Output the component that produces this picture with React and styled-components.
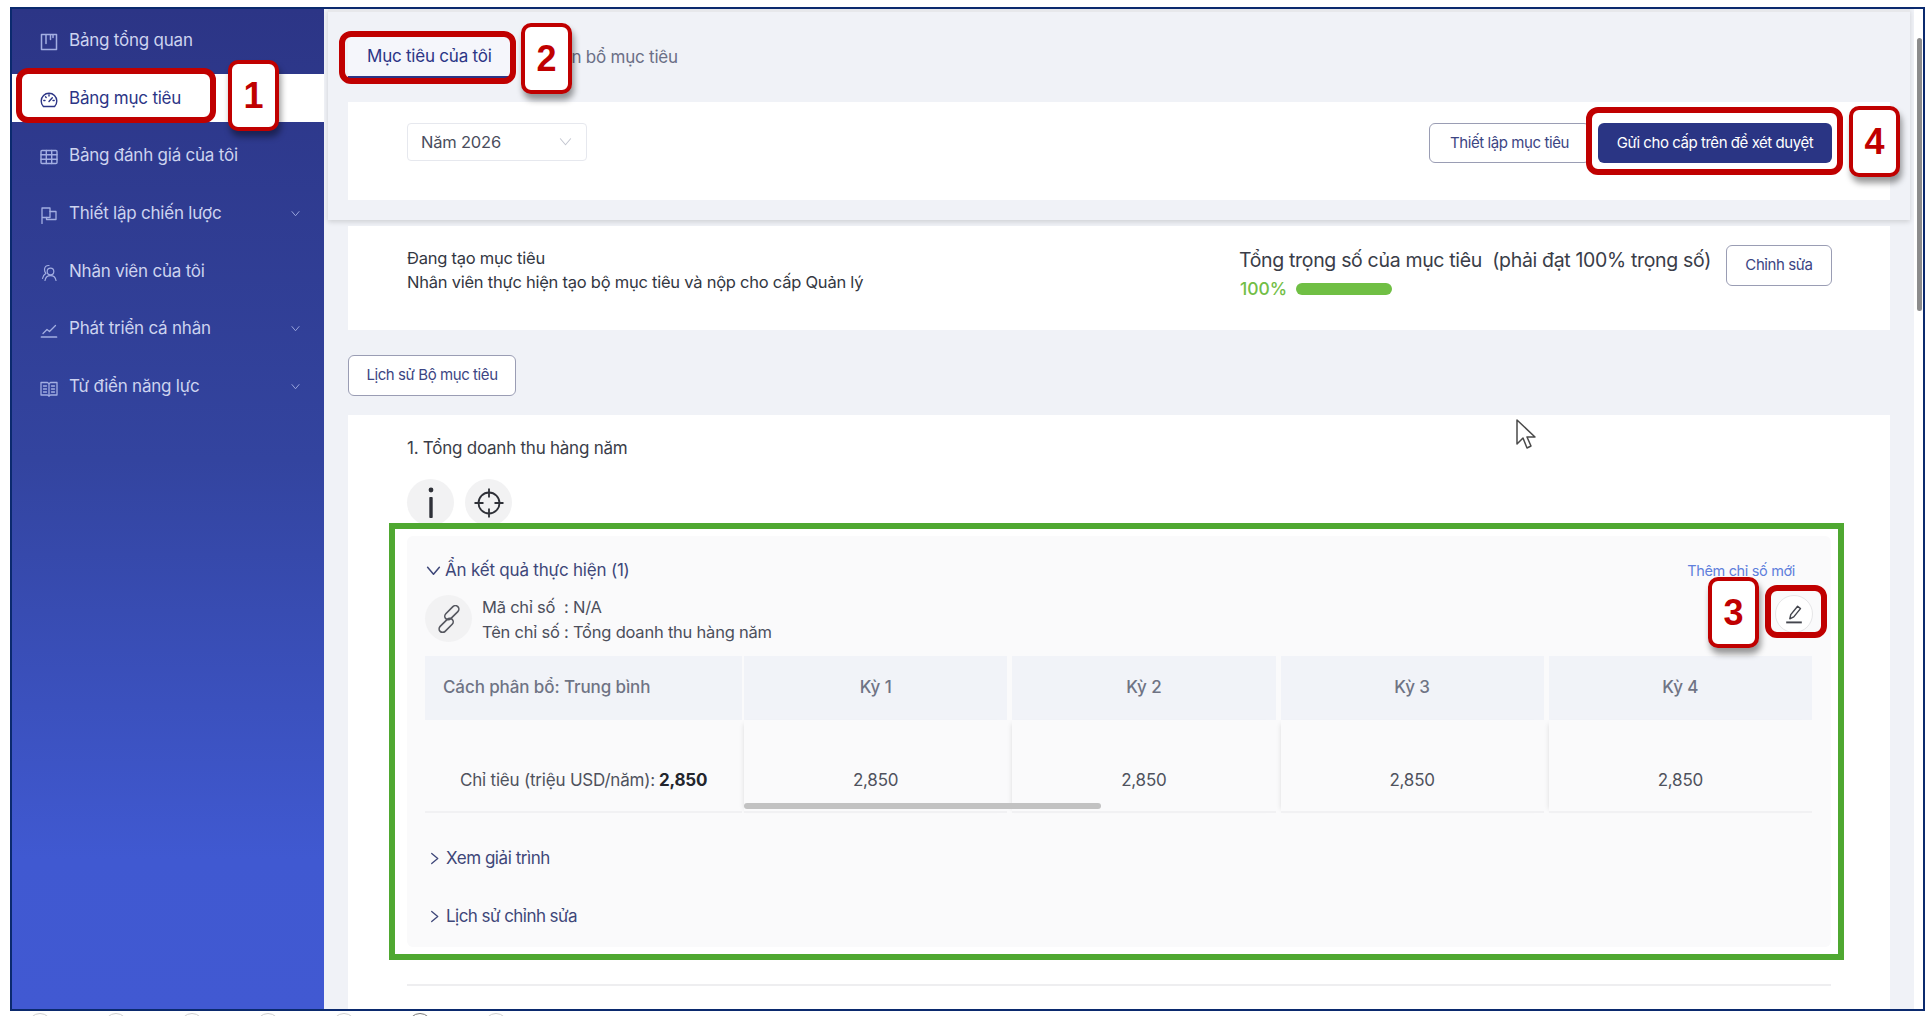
import React from "react";
import styled, { createGlobalStyle } from "styled-components";

const Global = createGlobalStyle`
  html, body { margin: 0; padding: 0; background: #fff; }
  body { font-family: Inter, "Noto Sans", "Liberation Sans", sans-serif; }
  * { box-sizing: border-box; }
`;

const Page = styled.div`
  position: relative;
  width: 1930px;
  height: 1016px;
  overflow: hidden;
  background: #fff;
`;
const Frame = styled.div`
  display: flex;
  width: 1915px;
  height: 1004px;
  margin: 7px 0 0 10px;
  border: 2px solid #0b2a6e;
  overflow: hidden;
`;
const Sidebar = styled.nav`
  flex: 0 0 312px;
  display: flex;
  flex-direction: column;
  gap: 9.7px;
  padding-top: 7px;
  background: linear-gradient(180deg, #2c3586 0%, #33449f 45%, #4059d1 85%, #4159d2 100%);
`;
const NavItem = styled.div`
  display: flex;
  align-items: center;
  gap: 11px;
  height: 48px;
  padding: 0 22px 0 28px;
  font-size: 17px;
  letter-spacing: -0.22px;
  color: ${(p) => (p.$active ? "#2c3586" : "#cdd3ef")};
  background: ${(p) => (p.$active ? "#fff" : "transparent")};
  svg { flex: none; }
`;
const NavIcon = styled.span`
  display: flex;
  padding-top: 4px;
  color: ${(p) => (p.$active ? "#2c3586" : "#a3aee2")};
`;
const NavChevron = styled.span`
  display: flex;
  margin-left: auto;
  padding-right: 2px;
  color: #a3aee2;
`;
const Main = styled.div`
  flex: 1;
  display: flex;
  min-width: 0;
`;
const Content = styled.div`
  flex: 1;
  background: #f0f2f7;
  min-width: 0;
  overflow: hidden;
`;
const Track = styled.div`
  flex: 0 0 9px;
  background: #fff;
  padding-top: 29px;
`;
const Thumb = styled.div`
  width: 5px;
  margin-left: 3px;
  height: 273px;
  border-radius: 3px;
  background: #8c8c8c;
`;
const Sticky = styled.header`
  margin: 0 4px 0 4px;
  height: 211px;
  padding: 0 20px;
  background: #f0f2f7;
  border-top: 3px solid #e7e8eb;
  box-shadow: 0 2px 5px rgba(0, 0, 0, 0.14);
`;
const Tabs = styled.div`
  display: flex;
  height: 90px;
  padding-top: 24px;
  align-items: flex-start;
  gap: 12px;
`;
const Tab = styled.div`
  height: 42px;
  padding: 0 19px;
  display: flex;
  align-items: center;
  font-size: 17px;
  letter-spacing: -0.22px;
  color: ${(p) => (p.$active ? "#2c3586" : "#6b6f86")};
  background: ${(p) => (p.$active ? "#f5f6fb" : "transparent")};
  border-bottom: ${(p) => (p.$active ? "2px solid #2c3586" : "none")};
`;
const ToolCard = styled.section`
  display: flex;
  justify-content: space-between;
  align-items: flex-start;
  height: 98px;
  padding: 21px 58px 0 59px;
  background: #fff;
`;
const YearSelect = styled.div`
  display: flex;
  align-items: center;
  justify-content: space-between;
  width: 180px;
  height: 38px;
  padding: 0 14px 1px 13px;
  border: 1px solid #e6e8ee;
  border-radius: 4px;
  font-size: 16.5px;
  letter-spacing: -0.2px;
  color: #4a4d5c;
`;
const ButtonRow = styled.div`
  display: flex;
  gap: 8px;
`;
const OutlineButton = styled.div`
  display: flex;
  align-items: center;
  justify-content: center;
  height: ${(p) => p.$h || 40}px;
  width: ${(p) => p.$w}px;
  padding-bottom: 2px;
  border: 1px solid #9a9db4;
  border-radius: 6px;
  font-size: 15px;
  letter-spacing: -0.42px;
  color: #3c4583;
  background: #fff;
`;
const PrimaryButton = styled.div`
  display: flex;
  align-items: center;
  justify-content: center;
  width: 234px;
  height: 40px;
  padding-bottom: 2px;
  border-radius: 6px;
  background: #2a3584;
  color: #fff;
  font-size: 15px;
  letter-spacing: -0.45px;
`;
const Body = styled.div`
  padding: 6px 24px 0 24px;
`;
const StatusCard = styled.section`
  display: flex;
  justify-content: space-between;
  height: 104px;
  padding: 19px 58px 0 59px;
  background: #fff;
`;
const StatusText = styled.div`
  padding-top: 1px;
  font-size: 16.5px;
  line-height: 24px;
  letter-spacing: -0.24px;
  color: #333742;
`;
const WeightGroup = styled.div`
  display: flex;
  gap: 15px;
  align-items: flex-start;
`;
const WeightTitle = styled.div`
  font-size: 19.5px;
  line-height: 26px;
  padding-top: 2px;
  letter-spacing: -0.33px;
  color: #3a3d48;
  white-space: pre;
`;
const WeightBar = styled.div`
  display: flex;
  align-items: center;
  gap: 9px;
  margin-top: 3px;
  padding: 1px 0 0 1px;
  font-size: 17.5px;
  font-weight: 500;
  line-height: 24px;
  color: #72be46;
`;
const BarFill = styled.div`
  width: 96px;
  height: 12px;
  border-radius: 6px;
  background: #70bf44;
`;
const HistoryButton = styled(OutlineButton)`
  margin-top: 25px;
`;
const GoalCard = styled.section`
  margin-top: 19px;
  height: 600px;
  padding: 20px 59px 0;
  background: #fff;
`;
const GoalTitle = styled.div`
  padding-top: 1px;
  height: 24px;
  font-size: 17px;
  line-height: 24px;
  letter-spacing: -0.24px;
  color: #3a3d48;
`;
const RoundRow = styled.div`
  display: flex;
  gap: 11px;
  margin-top: 20px;
`;
const RoundIcon = styled.div`
  display: flex;
  align-items: center;
  justify-content: center;
  flex: none;
  width: 47px;
  height: 47px;
  border-radius: 50%;
  background: #f2f2f3;
  color: #2f3138;
`;
const ResultPanel = styled.div`
  margin-top: 10px;
  height: 411px;
  padding: 22px 19px 0 18px;
  background: #fafafb;
  border-radius: 6px;
`;
const PanelHead = styled.div`
  display: flex;
  justify-content: space-between;
  align-items: center;
  height: 24px;
`;
const Toggle = styled.div`
  display: flex;
  align-items: center;
  gap: ${(p) => p.$gap || 4}px;
  height: 24px;
  padding-left: ${(p) => p.$indent || 1}px;
  font-size: 17px;
  letter-spacing: ${(p) => p.$track || -0.2}px;
  color: #3e4779;
  svg { flex: none; }
`;
const AddLink = styled.div`
  margin-right: 17px;
  font-size: 14.5px;
  letter-spacing: -0.34px;
  color: #5f7fdc;
`;
const InfoRow = styled.div`
  display: flex;
  align-items: flex-start;
  margin-top: 13px;
  height: 48px;
`;
const InfoText = styled.div`
  margin-left: 10px;
  flex: 1;
  font-size: 16.5px;
  line-height: 25px;
  letter-spacing: -0.22px;
  color: #4c4f5b;
`;
const EditCircle = styled.div`
  display: flex;
  align-items: center;
  justify-content: center;
  width: 38px;
  height: 38px;
  margin-right: -1px;
  border: 1px solid #e6e6e8;
  border-radius: 50%;
  background: #fff;
`;
const TableWrap = styled.div`
  position: relative;
  margin-top: 13px;
  display: grid;
  grid-template-columns: 314px repeat(4, 1fr);
  column-gap: 5px;
`;
const HeadCell = styled.div`
  display: flex;
  align-items: center;
  justify-content: ${(p) => (p.$first ? "flex-start" : "center")};
  height: 64px;
  margin-right: ${(p) => (p.$first ? -3 : 0)}px;
  padding: 0 0 2px ${(p) => (p.$first ? 18 : 0)}px;
  background: #f1f3f8;
  font-size: 17px;
  font-weight: 500;
  letter-spacing: -0.1px;
  color: #6f7384;
`;
const ValueCell = styled.div`
  display: flex;
  align-items: flex-end;
  justify-content: ${(p) => (p.$first ? "flex-start" : "center")};
  height: 93px;
  margin-right: ${(p) => (p.$first ? -3 : 0)}px;
  padding: 0 0 19px ${(p) => (p.$first ? 35 : 0)}px;
  border-bottom: 2px solid #f1f1f3;
  box-shadow: ${(p) => (p.$first ? "none" : "-4px 0 5px -4px rgba(0,0,0,0.12)")};
  font-size: 17px;
  line-height: 24px;
  letter-spacing: -0.2px;
  color: #4f525d;
  b { font-weight: 700; color: #23252c; margin-left: 4px; }
`;
const HScroll = styled.div`
  position: absolute;
  left: 319px;
  bottom: 4px;
  width: 357px;
  height: 6px;
  border-radius: 3px;
  background: #c2c2c2;
`;
const Section = styled.div`
  margin-top: 33px;
  & + & { margin-top: 34px; }
`;
const Divider = styled.hr`
  height: 2px;
  margin: 37px 0 0;
  border: 0;
  background: #eeeef0;
`;
const FooterArcs = styled.div`
  display: flex;
  gap: 52px;
  height: 5px;
  padding-left: 28px;
  overflow: hidden;
`;
const Arc = styled.span`
  flex: none;
  width: 24px;
  height: 24px;
  margin-top: 2px;
  border-radius: 50%;
  border: 1px solid ${(p) => (p.$dark ? "#777" : "#cfcfcf")};
`;
const Callout = styled.div`
  position: absolute;
  left: ${(p) => p.$x}px;
  top: ${(p) => p.$y}px;
  width: ${(p) => p.$w}px;
  height: ${(p) => p.$h}px;
  border: 6px solid #c00000;
  border-radius: 12px;
  pointer-events: none;
`;
const Badge = styled.div`
  position: absolute;
  left: ${(p) => p.$x}px;
  top: ${(p) => p.$y}px;
  width: 51px;
  height: 71px;
  display: flex;
  align-items: center;
  justify-content: center;
  border: 4px solid #c00000;
  border-radius: 10px;
  background: #fff;
  box-shadow: 2px 6px 6px rgba(0, 0, 0, 0.4);
  font-family: "Liberation Sans", Arial, sans-serif;
  font-weight: 700;
  font-size: 36px;
  color: #c00000;
`;
const GreenBox = styled.div`
  position: absolute;
  left: 389px;
  top: 523px;
  width: 1455px;
  height: 437px;
  border: 6px solid #4fa831;
  pointer-events: none;
`;
const Cursor = styled.svg`
  position: absolute;
  left: 1515px;
  top: 418px;
`;

const I = ({ children, w = 1.1 }) => (
  <svg width="18" height="18" viewBox="0 0 18 18" fill="none" stroke="currentColor" strokeWidth={w} strokeLinecap="round" strokeLinejoin="round">{children}</svg>
);
const Chev = ({ dir = "down", s = 14, c = "currentColor", w = 1.4 }) => (
  <svg width={s} height={s} viewBox="0 0 14 14" fill="none" stroke={c} strokeWidth={w} strokeLinecap="round" strokeLinejoin="round">
    {dir === "down" ? <path d="M1.500 4 7 10.500 12.500 4" /> : <path d="M4 1.500 10.500 7 4 12.500" />}
  </svg>
);
const navItems = [
  ["Bảng tổng quan", <I key="a" w={1.5}><rect x="1.500" y="1.500" width="15" height="15" /><path d="M6 2v8.500M10.500 2v4.500M13 2v2.500" /></I>],
  ["Bảng mục tiêu", <I key="b" w={1.4}><path d="M3.400 15.500a7.800 7.800 0 1 1 11.200 0Z" /><path d="m9 10.500 3.300-3.800M3.800 9.500h1.200M13 9.500h1.200M5.500 5.800l.7.7M9 3.800v1.200" /></I>, false, true],
  ["Bảng đánh giá của tôi", <I key="c" w={1.4}><rect x="1" y="2.500" width="16" height="13" rx="1" /><path d="M1 6.800h16M1 11.200h16M6.300 2.500v13M11.700 2.500v13" /></I>],
  ["Thiết lập chiến lược", <I key="d" w={1.3}><path d="M2 17.500V2h8v9.500H2" /><path d="M10 5.500h6v8H6.500v-2" /></I>, true],
  ["Nhân viên của tôi", <I key="e" w={1.2}><circle cx="10.500" cy="7.500" r="3.300" /><path d="M5 16.500c.5-3 2.600-4.800 5.500-4.800s5 1.800 5.500 4.800M9 1.500a4.300 4.300 0 0 0-4.500 3.800c-.1 1.700.5 3 1.500 4-1.800 1-3 2.800-3.500 5.200" /></I>],
  ["Phát triển cá nhân", <I key="f" w={1.3}><path d="M1.500 16h15" strokeWidth="1.700" /><path d="M3 12.500 7 8.500l2.500 2 6-6" /></I>, true],
  ["Từ điển năng lực", <I key="g" w={1.3}><path d="M1 3.500h6.500L9 4.700l1.500-1.200H17V16h-6.500L9 17l-1.500-1H1Z" /><path d="M9 4.700V17M3.500 7h3M3.500 10h3M3.500 13h3M11.500 7h3M11.500 10h3M11.500 13h3" /></I>, true],
];
const periods = ["Kỳ 1", "Kỳ 2", "Kỳ 3", "Kỳ 4"];
const callouts = [
  { x: 16, y: 68, w: 200, h: 55 },
  { x: 339, y: 31, w: 177, h: 53 },
  { x: 1586, y: 107, w: 257, h: 68 },
  { x: 1765, y: 585, w: 62, h: 53 },
];
const badges = [
  { x: 228, y: 60, n: 1 },
  { x: 521, y: 23, n: 2 },
  { x: 1708, y: 577, n: 3 },
  { x: 1849, y: 106, n: 4 },
];

export default function App() {
  return (
    <Page>
      <Global />
      <Frame>
        <Sidebar>
          {navItems.map(([label, icon, more, active]) => (
            <NavItem key={label} $active={active}>
              <NavIcon $active={active}>{icon}</NavIcon>
              {label}
              {more && <NavChevron><Chev s={9} /></NavChevron>}
            </NavItem>
          ))}
        </Sidebar>
        <Main>
          <Content>
            <Sticky>
              <Tabs>
                <Tab $active>Mục tiêu của tôi</Tab>
                <Tab>Phân bổ mục tiêu</Tab>
              </Tabs>
              <ToolCard>
                <YearSelect>Năm 2026<Chev s={13} c="#c3c6d0" w={1.1} /></YearSelect>
                <ButtonRow>
                  <OutlineButton $w={161}>Thiết lập mục tiêu</OutlineButton>
                  <PrimaryButton>Gửi cho cấp trên để xét duyệt</PrimaryButton>
                </ButtonRow>
              </ToolCard>
            </Sticky>
            <Body>
              <StatusCard>
                <StatusText>
                  Đang tạo mục tiêu<br />
                  Nhân viên thực hiện tạo bộ mục tiêu và nộp cho cấp Quản lý
                </StatusText>
                <WeightGroup>
                  <div>
                    <WeightTitle>Tổng trọng số của mục tiêu  (phải đạt 100% trọng số)</WeightTitle>
                    <WeightBar>100%<BarFill /></WeightBar>
                  </div>
                  <OutlineButton $w={106} $h={41}>Chỉnh sửa</OutlineButton>
                </WeightGroup>
              </StatusCard>
              <HistoryButton $w={168} $h={41}>Lịch sử Bộ mục tiêu</HistoryButton>
              <GoalCard>
                <GoalTitle>1. Tổng doanh thu hàng năm</GoalTitle>
                <RoundRow>
                  <RoundIcon>
                    <svg width="24" height="34" viewBox="0 0 24 34" fill="currentColor"><circle cx="12" cy="4" r="2.400" /><rect x="10.300" y="11" width="3.400" height="21" rx="0.800" /></svg>
                  </RoundIcon>
                  <RoundIcon>
                    <svg width="32" height="32" viewBox="0 0 32 32" fill="none" stroke="currentColor" strokeWidth="1.800"><circle cx="16" cy="16" r="10.500" /><path d="M16 1.500v9M16 21.500v9M1.500 16h9M21.500 16h9" /></svg>
                  </RoundIcon>
                </RoundRow>
                <ResultPanel>
                  <PanelHead>
                    <Toggle><Chev s={15} />Ẩn kết quả thực hiện (1)</Toggle>
                    <AddLink>Thêm chỉ số mới</AddLink>
                  </PanelHead>
                  <InfoRow>
                    <RoundIcon>
                      <svg width="28" height="28" viewBox="0 0 28 28" fill="none" stroke="#55575f" strokeWidth="1.600">
                        <rect x="-1" y="13" width="17" height="7" rx="3.500" transform="rotate(-45 14 14)" />
                        <rect x="12" y="8" width="17" height="7" rx="3.500" transform="rotate(-45 14 14)" />
                      </svg>
                    </RoundIcon>
                    <InfoText>
                      Mã chỉ số&nbsp; : N/A<br />
                      Tên chỉ số : Tổng doanh thu hàng năm
                    </InfoText>
                    <EditCircle>
                      <svg width="24" height="24" viewBox="0 0 20 20" fill="none" stroke="#44464e" strokeWidth="1.200" strokeLinejoin="round"><path d="M6.500 14 7.300 10.500 13 3.500l2.400 2L9.800 12.400Z" /><path d="M3.500 17h13" strokeWidth="1.600" /></svg>
                    </EditCircle>
                  </InfoRow>
                  <TableWrap>
                    <HeadCell $first>Cách phân bổ: Trung bình</HeadCell>
                    {periods.map((p) => <HeadCell key={p}>{p}</HeadCell>)}
                    <ValueCell $first>Chỉ tiêu (triệu USD/năm):<b>2,850</b></ValueCell>
                    {periods.map((p) => <ValueCell key={p}>2,850</ValueCell>)}
                    <HScroll />
                  </TableWrap>
                  <Section><Toggle $indent={3} $gap={5} $track={-0.45}><Chev dir="right" s={13} />Xem giải trình</Toggle></Section>
                  <Section><Toggle $indent={3} $gap={5} $track={-0.55}><Chev dir="right" s={13} />Lịch sử chỉnh sửa</Toggle></Section>
                </ResultPanel>
                <Divider />
              </GoalCard>
            </Body>
          </Content>
          <Track><Thumb /></Track>
        </Main>
      </Frame>
      <FooterArcs>
        {[0, 1, 2, 3, 4, 5, 6].map((i) => <Arc key={i} $dark={i === 5} />)}
      </FooterArcs>
      <GreenBox />
      {callouts.map((c) => <Callout key={c.x} $x={c.x} $y={c.y} $w={c.w} $h={c.h} />)}
      {badges.map((b) => <Badge key={b.n} $x={b.x} $y={b.y}>{b.n}</Badge>)}
      <Cursor width="22" height="32" viewBox="0 0 22 32">
        <path d="M2 2v24l6-6 4 10 4-2-4-9h8Z" fill="#fff" stroke="#4a4a4a" strokeWidth="1.500" strokeLinejoin="round" />
      </Cursor>
    </Page>
  );
}
